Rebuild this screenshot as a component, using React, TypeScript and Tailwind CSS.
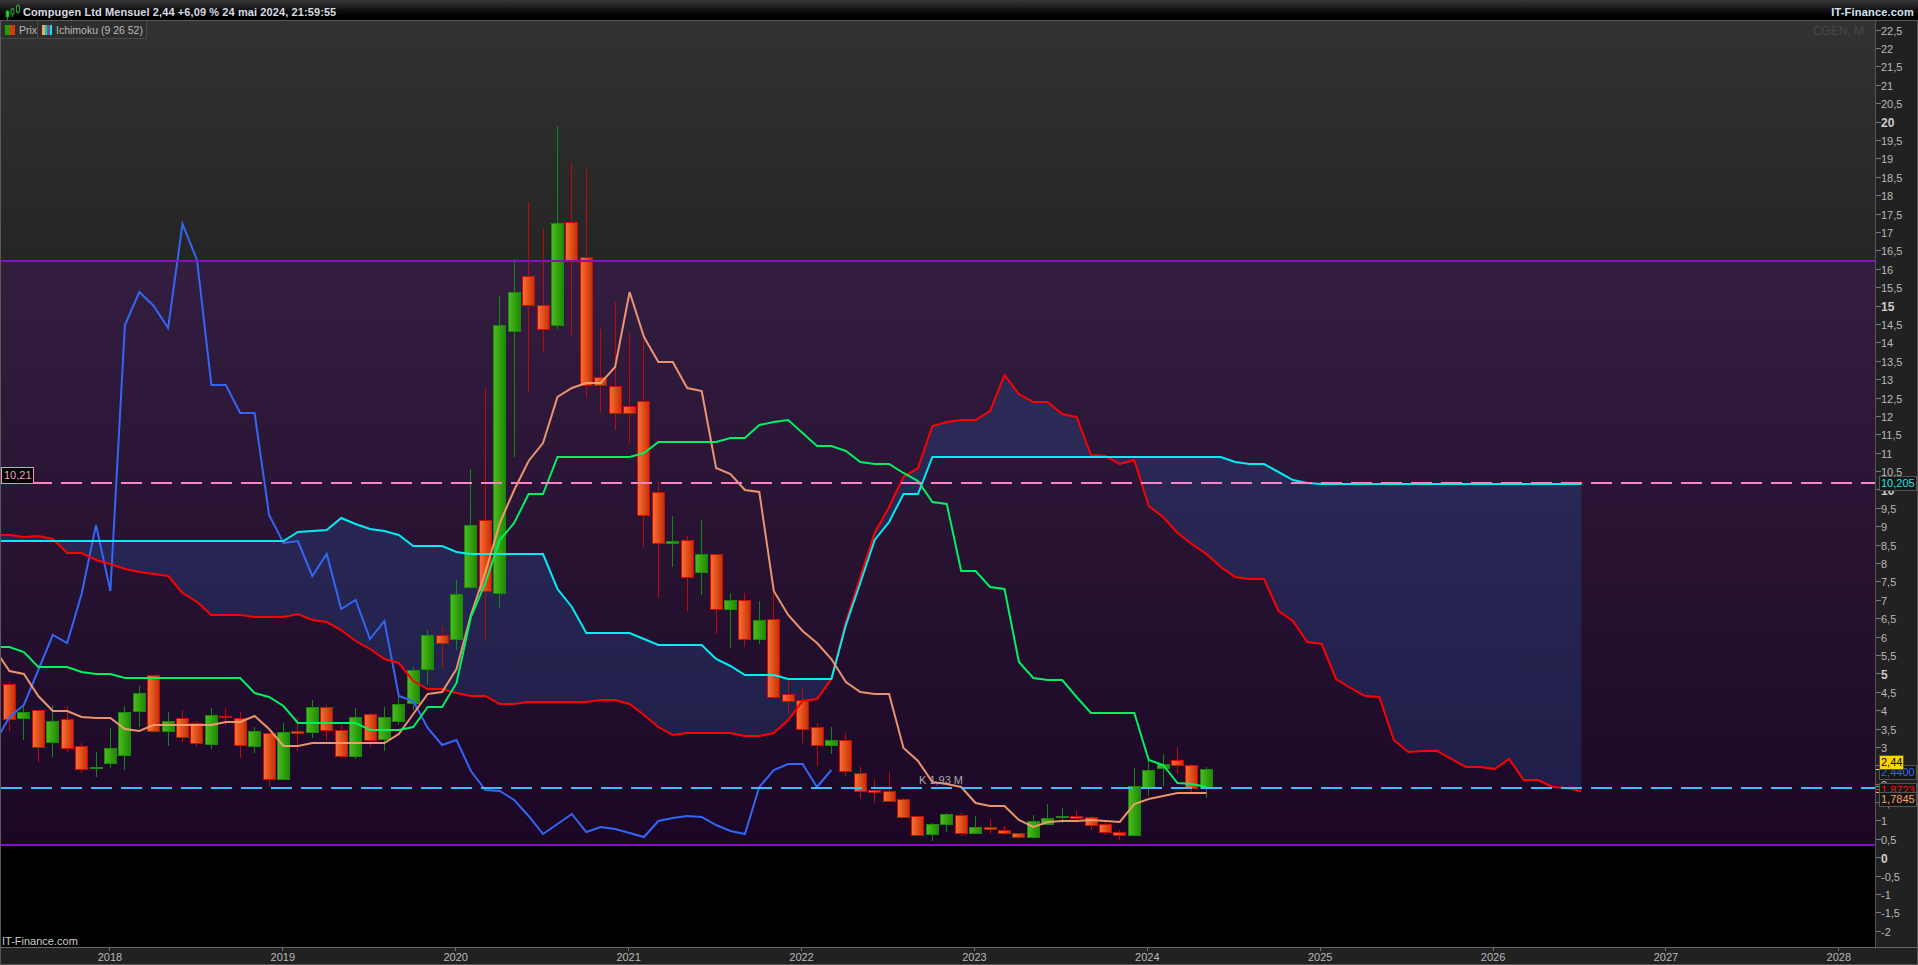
const CANDLES: [string, number, number, number, number][] = [
  ["r", 682, 684, 719, 731], ["g", 706, 712, 718, 740], ["r", 710, 710, 747, 762], ["g", 706, 721, 742, 757],
  ["r", 706, 719, 748, 752], ["r", 743, 746, 769, 773], ["g", 752, 767, 767, 777], ["g", 728, 748, 763, 768],
  ["g", 706, 712, 755, 770], ["g", 686, 693, 711, 727], ["r", 675, 675, 731, 733], ["g", 712, 721, 731, 746],
  ["r", 710, 718, 737, 742], ["r", 721, 723, 743, 747], ["g", 708, 715, 744, 749], ["r", 708, 716, 717, 725],
  ["r", 712, 718, 745, 758], ["g", 727, 731, 746, 753], ["r", 733, 733, 779, 786], ["g", 723, 732, 779, 779],
  ["r", 717, 731, 733, 751], ["g", 700, 707, 732, 738], ["r", 705, 707, 730, 740], ["r", 725, 730, 756, 758],
  ["g", 708, 717, 756, 759], ["r", 713, 714, 740, 747], ["g", 707, 717, 739, 751], ["g", 697, 704, 721, 725],
  ["g", 667, 670, 703, 710], ["g", 630, 635, 669, 685], ["r", 626, 635, 643, 668], ["g", 580, 594, 639, 650],
  ["g", 469, 525, 587, 587], ["r", 388, 520, 591, 641], ["g", 296, 325, 593, 608], ["g", 259, 292, 331, 457],
  ["r", 202, 276, 305, 392], ["r", 229, 305, 329, 352], ["g", 126, 223, 325, 329], ["r", 163, 222, 261, 335],
  ["r", 169, 257, 385, 398], ["r", 329, 377, 385, 412], ["r", 302, 386, 413, 430], ["r", 333, 406, 413, 443],
  ["r", 340, 401, 515, 547], ["r", 481, 492, 543, 598], ["g", 516, 541, 543, 567], ["r", 536, 540, 577, 611],
  ["g", 520, 554, 572, 595], ["r", 554, 554, 609, 634], ["g", 593, 600, 609, 648], ["r", 593, 600, 639, 647],
  ["g", 601, 620, 639, 644], ["r", 593, 619, 697, 699], ["r", 680, 694, 701, 714], ["r", 688, 700, 729, 743],
  ["r", 723, 727, 745, 766], ["g", 727, 740, 745, 754], ["r", 733, 740, 771, 776], ["r", 767, 773, 791, 799],
  ["r", 779, 790, 792, 803], ["r", 772, 791, 801, 802], ["r", 798, 799, 817, 817], ["r", 816, 816, 835, 835],
  ["g", 823, 824, 834, 841], ["g", 813, 814, 824, 832], ["r", 813, 815, 833, 836], ["g", 816, 827, 833, 834],
  ["r", 819, 827, 829, 834], ["r", 826, 830, 833, 835], ["r", 833, 833, 837, 839], ["g", 815, 821, 837, 837],
  ["g", 804, 818, 824, 825], ["g", 808, 816, 817, 823], ["r", 811, 816, 818, 823], ["r", 816, 817, 825, 830],
  ["r", 822, 824, 832, 835], ["r", 830, 832, 835, 840], ["g", 768, 786, 835, 835], ["g", 760, 770, 787, 796],
  ["g", 754, 764, 768, 786], ["r", 747, 760, 765, 774], ["r", 764, 765, 788, 792], ["g", 767, 769, 788, 798],
]

const flat = (y: number, n: number) => Array<number>(n).fill(y)

// every series starts one month before the first candle, off the left edge
const BLUE = [742, 717, 705, 670, 635, 643, 594, 525, 591, 325, 292, 306, 328, 224, 260, 385, 385, 413, 413, 515, 543, 541, 576, 554, 609, 600, 639, 621, 696, 701, 728, 745, 740, 771, 790, 791, 800, 816, 834, 824, 814, 832, 827, 829, 833, 837, 821, 818, 816, 817, 825, 831, 834, 787, 770, 764, 764, 787, 770]
const RED = [535, 535, 537, 536, 539, 553, 553, 560, 564, 569, 572, 574, 576, 593, 602, 615, 615, 615, 617, 617, 617, 614, 620, 622, 630, 641, 649, 659, 663, 681, 689, 689, 693, 696, 696, 704, 704, 702, 702, 702, 702, 702, 700, 700, 704, 715, 727, 735, 733, 733, 733, 733, 736, 736, 733, 720, 701, 699, 679, 622, 577, 533, 507, 477, 468, 426, 422, 420, 420, 411, 375, 394, 402, 402, 414, 417, 455, 456, 464, 460, 506, 517, 533, 544, 554, 567, 577, 579, 579, 611, 621, 642, 644, 679, 688, 696, 697, 740, 752, 751, 751, 759, 767, 767, 769, 759, 780, 780, 787, 788, 791]
const CYAN = [...flat(541, 21), 532, 531, 530, 518, 524, 529, 531, 535, 546, 546, 546, 552, ...flat(554, 6), 589, 607, 633, 633, 633, 633, 639, ...flat(645, 4), 659, 666, 675, 675, 675, ...flat(679, 4), 625, 583, 540, 522, 494, 494, ...flat(457, 21), 462, 464, 464, 472, 480, 483, ...flat(484, 19)]
const GREEN = [647, 647, 652, 667, 667, 667, 672, 674, 674, ...flat(678, 9), 693, 697, 706, ...flat(723, 5), 730, 730, 730, 727, 707, 707, 683, 617, 583, 540, 523, 494, 494, ...flat(457, 6), 453, ...flat(442, 5), 438, 438, 425, 422, 420, 433, 446, 446, 451, 462, 464, 464, 473, 481, 502, 504, 571, 571, 587, 589, 662, 678, 680, 680, 697, ...flat(713, 4), 760, 765, 783, 784, 787]
const ORANGE = [650, 671, 674, 696, 711, 711, 717, 718, 718, 729, 731, ...flat(725, 5), 722, 722, 716, 729, 746, 746, ...flat(743, 6), 734, 714, 694, 692, 669, 615, 572, 523, 490, 461, 443, 397, 388, 383, 383, 367, 292, 337, 362, 362, 388, 391, 468, 474, 490, 492, 591, 615, 631, 643, 659, 682, 692, 694, 694, 748, 761, 782, 784, 787, 803, 806, 806, 820, 827, 822, 821, 821, 820, 821, 822, 804, 799, 796, 793, 793, 793]

const AXIS_TICKS = Array.from({ length: 50 }, (_, i) => 22.5 - i * 0.5)
const YEARS = [2018, 2019, 2020, 2021, 2022, 2023, 2024, 2025, 2026, 2027, 2028]

const xAt = (i: number) => 9.5 + 14.42 * i
const toPoints = (ys: number[]) => ys.map((y, k) => `${xAt(k - 1).toFixed(1)},${y}`).join(" ")

function Candle({ i, candle }: { i: number; candle: [string, number, number, number, number] }) {
  const [kind, high, top, bottom, low] = candle
  const x = Math.floor(xAt(i)) + 0.5
  const isGreen = kind === "g"
  const edge = isGreen ? "#148c0c" : "#cf0a0a"
  return (
    <g>
      <line x1={x} x2={x} y1={high} y2={low} stroke={isGreen ? "#0c8a0c" : "#c00808"} strokeWidth="1" />
      <rect
        x={x - 6}
        y={top + 0.5}
        width="12"
        height={Math.max(bottom - top, 1)}
        fill={isGreen ? "url(#candleGreen)" : "url(#candleRed)"}
        stroke={edge}
        strokeWidth="1"
      />
    </g>
  )
}

function Chart() {
  const cloud = [
    ...CYAN.map((y, k) => `${xAt(k - 1).toFixed(1)},${y}`),
    ...RED.map((y, k) => `${xAt(k - 1).toFixed(1)},${y}`).reverse(),
  ].join(" ")

  return (
    <svg className="absolute inset-0 h-full w-full" viewBox="1 21 1874 926" preserveAspectRatio="none">
      <defs>
        <linearGradient id="candleRed" x1="0" x2="1" y1="0" y2="0">
          <stop offset="0" stopColor="#fb7034" />
          <stop offset="1" stopColor="#c42f04" />
        </linearGradient>
        <linearGradient id="candleGreen" x1="0" x2="1" y1="0" y2="0">
          <stop offset="0" stopColor="#4fbb20" />
          <stop offset="1" stopColor="#1f8a00" />
        </linearGradient>
      </defs>

      <polygon points={cloud} fill="#265eb1" fillOpacity="0.25" />

      {CANDLES.map((candle, i) => (
        <Candle key={i} i={i} candle={candle} />
      ))}

      <polyline points={toPoints(BLUE)} fill="none" stroke="#3366f5" strokeWidth="2" />
      <polyline points={toPoints(RED)} fill="none" stroke="#ff0000" strokeWidth="2" />
      <polyline points={toPoints(CYAN)} fill="none" stroke="#00eef2" strokeWidth="2" />
      <polyline points={toPoints(ORANGE)} fill="none" stroke="#f9a074" strokeWidth="2" strokeOpacity="0.92" />
      <polyline points={toPoints(GREEN)} fill="none" stroke="#00f060" strokeWidth="2" />

      <line x1="1" x2="1875" y1="261" y2="261" stroke="#8410c4" strokeWidth="2" />
      <line x1="1" x2="1875" y1="845" y2="845" stroke="#8410c4" strokeWidth="2" />
      <line x1="1" x2="1875" y1="483" y2="483" stroke="#ff80c4" strokeWidth="2" strokeDasharray="21 9" />
      <line x1="1" x2="1875" y1="788" y2="788" stroke="#3fbcff" strokeWidth="2" strokeDasharray="21 9" />
    </svg>
  )
}

function Logo() {
  return (
    <svg width="16" height="16" viewBox="0 0 16 16" className="mr-[2px] shrink-0">
      <path d="M2.5 6v10M7.5 4v9M13 0v10" stroke="#1f9a2a" strokeWidth="1" />
      <rect x="1" y="7" width="3" height="6" fill="#1d1" stroke="#1f8a1f" strokeWidth="0.6" />
      <rect x="6" y="5" width="3" height="5" fill="#111" stroke="#3cc43c" strokeWidth="0.8" />
      <rect x="11.5" y="2" width="3" height="6" fill="#111" stroke="#3cc43c" strokeWidth="0.8" />
    </svg>
  )
}

function LegendChips() {
  return (
    <div className="absolute left-0 top-0 flex h-[18px] text-[10.5px] leading-[16px] text-[#b9b9b9]">
      <div className="flex w-[37px] items-center gap-[4px] border-b border-r border-[#484848] bg-[#2e2e2e] pl-[4px]">
        <span className="flex h-[10px]">
          <span className="w-[5px] bg-[#2c9a08]" />
          <span className="w-[5px] bg-[#d43c08]" />
        </span>
        Prix
      </div>
      <div className="flex w-[109px] items-center gap-[4px] border-b border-r border-[#484848] bg-[#2e2e2e] pl-[4px]">
        <span className="flex h-[10px]">
          <span className="w-[3px] bg-[#f9a074]" />
          <span className="w-[2px] bg-[#00e070]" />
          <span className="w-[2px] bg-[#3366f5]" />
          <span className="w-[1px] bg-[#ee1111]" />
          <span className="w-[2px] bg-[#00eef2]" />
        </span>
        Ichimoku (9 26 52)
      </div>
    </div>
  )
}

function PriceAxis() {
  return (
    <div className="relative flex w-[43px] shrink-0 flex-col border-l border-r border-[#555555] bg-[#212121]">
      {AXIS_TICKS.map((value) => (
        <div key={value} className="flex h-[18.4px] shrink-0 items-center">
          <span className="h-px w-[5px] bg-[#777777]" />
          <span
            className={
              value % 5 === 0
                ? "pt-[2px] text-[12px] font-bold leading-none text-[#cccccc]"
                : "pt-[2px] text-[11px] leading-none text-[#b9b9b9]"
            }
          >
            {String(value).replace(".", ",")}
          </span>
        </div>
      ))}
      <span className="absolute left-0 top-[748px] h-px w-[5px] bg-[#dddddd]" />
      <span className="absolute left-0 top-[765px] h-px w-[5px] bg-[#00e060]" />
      <span className="absolute left-0 top-[768px] h-px w-[5px] bg-[#ff2020]" />
      <span className="absolute left-0 top-[771px] h-px w-[5px] bg-[#f9a074]" />

      <span className="absolute left-[3px] top-[455px] h-[15px] w-[38px] border border-[#555555] bg-[#161616] pl-px text-[11px] leading-[13px] text-[#1fe3e3]">
        10,205
      </span>
      <span className="absolute left-[3px] top-[744px] h-[15px] w-[38px] border border-[#555555] bg-[#161616] pl-px text-[11px] leading-[13px] text-[#3366f5]">
        2,4400
      </span>
      <span className="absolute left-[3px] top-[762px] h-[15px] w-[38px] border border-[#555555] bg-[#161616] pl-px text-[11px] leading-[13px] text-[#ff1010]">
        1,8723
      </span>
      <span className="absolute left-[3px] top-[771px] h-[15px] w-[38px] border border-[#555555] bg-[#161616] pl-px text-[11px] leading-[13px] text-[#f9a074]">
        1,7845
      </span>
      <span className="absolute left-[3px] top-[734px] h-[15px] w-[25px] border border-[#555555] bg-[#ffd500] pl-px text-[11px] leading-[13px] text-black">
        2,44
      </span>
    </div>
  )
}

function TimeAxis() {
  return (
    <div className="flex h-[17px] shrink-0 border-b border-l border-r border-[#555555] bg-[#212121] pl-[22.5px]">
      {YEARS.map((year) => (
        <div key={year} className="flex w-[172.9px] shrink-0 flex-col items-center">
          <span className="h-[3px] w-px bg-[#777777]" />
          <span className="text-[11px] leading-[13px] text-[#b9b9b9]">{year}</span>
        </div>
      ))}
    </div>
  )
}

export default function App() {
  return (
    <main className="flex h-[965px] w-[1918px] flex-col overflow-hidden bg-[#212121] font-['Liberation_Sans',Arial,sans-serif]">
      <header className="flex h-[21px] shrink-0 items-center justify-between border-b border-[#5a5a5a] bg-linear-to-b from-[#383838] via-[#050505] via-70% to-black pl-[5px] pr-[4px] pt-[4px] text-[11px] font-bold tracking-[0.1px] text-[#d6dbe2]">
        <div className="flex items-center">
          <Logo />
          Compugen Ltd Mensuel 2,44 +6,09 % 24 mai 2024, 21:59:55
        </div>
        <span className="tracking-[0.2px] text-[#d4e4f4]">IT-Finance.com</span>
      </header>

      <div className="flex h-[926px] shrink-0">
        <section className="relative flex min-w-0 flex-1 flex-col overflow-hidden border-l border-[#5a5a5a]">
          <div className="h-[240px] shrink-0 bg-linear-to-b from-[#323232] to-[#252525]" />
          <div className="h-[584px] shrink-0 bg-linear-to-b from-[#341e40] to-[#1b0725]" />
          <div className="flex-1 bg-black" />

          <Chart />
          <LegendChips />

          <span className="absolute right-[11px] top-[1px] text-[12px] text-[#484848]">CGEN, M</span>
          <span className="absolute left-0 top-[446px] h-[17px] w-[33px] border border-[#ff88c4] bg-black pl-[2px] text-[11px] leading-[15px] text-[#ff9ccf]">
            10,21
          </span>
          <span className="absolute left-[918px] top-[753px] text-[11px] leading-[13px] text-[#aaaaaa]">K 1,93 M</span>
          <span className="absolute bottom-[-1px] left-[1px] text-[11px] leading-[13px] text-[#cccccc]">IT-Finance.com</span>
        </section>
        <PriceAxis />
      </div>

      <div className="h-px shrink-0 bg-[#666666]" />
      <TimeAxis />
    </main>
  )
}
